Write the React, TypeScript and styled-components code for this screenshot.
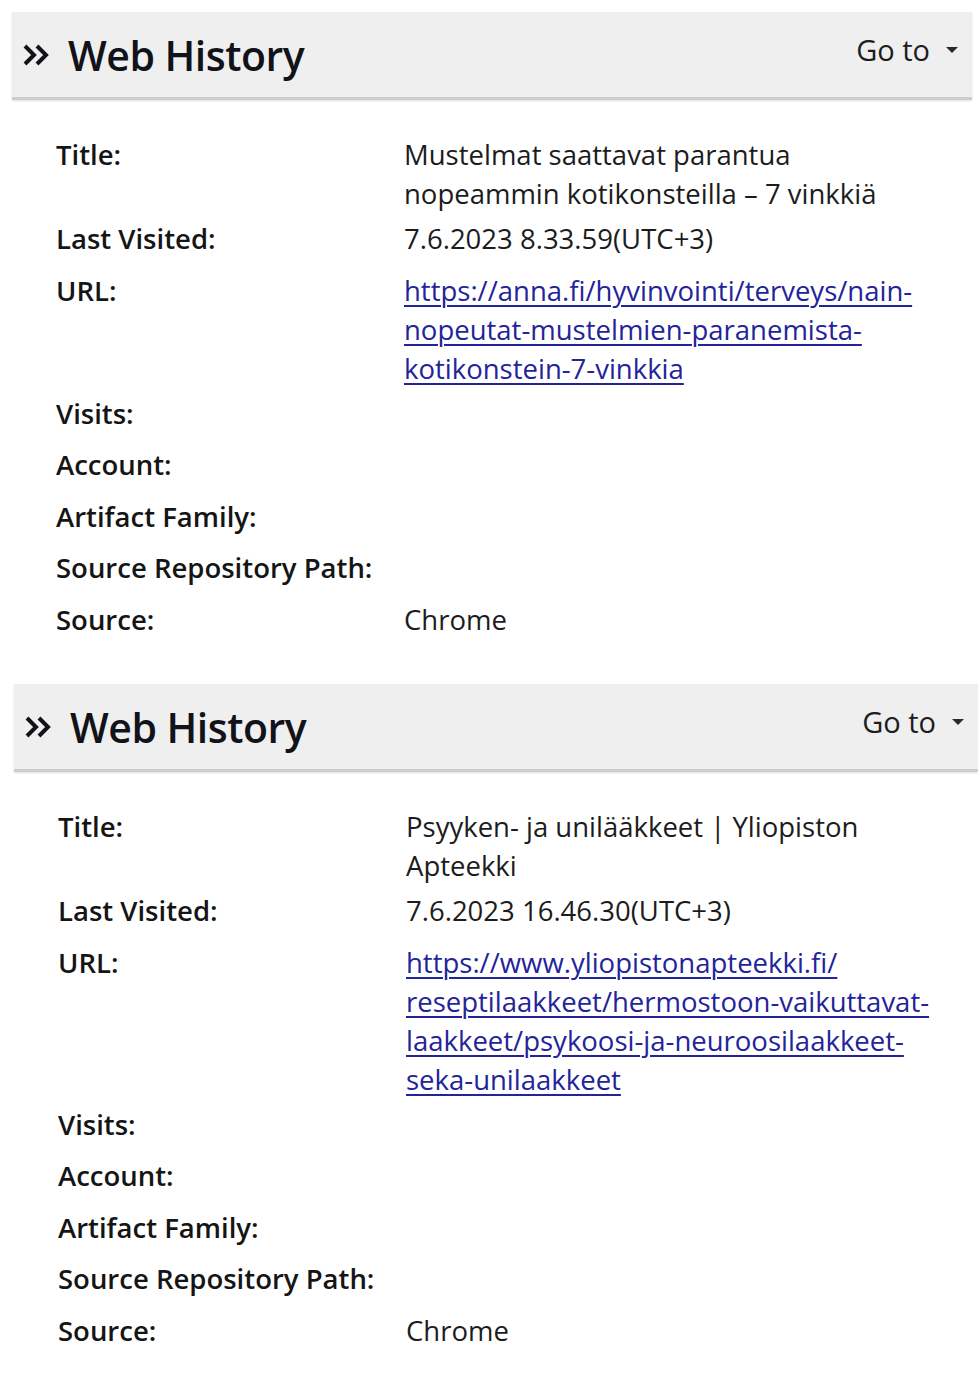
import styled, { createGlobalStyle } from "styled-components";
import { FC } from "react";

const GlobalStyle = createGlobalStyle`
  html, body {
    margin: 0;
    padding: 0;
    background: #ffffff;
  }
  body {
    font-family: "Open Sans", "Noto Sans", sans-serif;
    color: #161616;
  }
`;

interface Field {
  label: string;
  lines?: string[];
  link?: boolean;
}

interface RecordData {
  fields: Field[];
}

const records: RecordData[] = [
  {
    fields: [
      {
        label: "Title:",
        lines: ["Mustelmat saattavat parantua", "nopeammin kotikonsteilla – 7 vinkkiä"],
      },
      { label: "Last Visited:", lines: ["7.6.2023 8.33.59(UTC+3)"] },
      {
        label: "URL:",
        link: true,
        lines: [
          "https://anna.fi/hyvinvointi/terveys/nain-",
          "nopeutat-mustelmien-paranemista-",
          "kotikonstein-7-vinkkia",
        ],
      },
      { label: "Visits:" },
      { label: "Account:" },
      { label: "Artifact Family:" },
      { label: "Source Repository Path:" },
      { label: "Source:", lines: ["Chrome"] },
    ],
  },
  {
    fields: [
      {
        label: "Title:",
        lines: ["Psyyken- ja unilääkkeet | Yliopiston", "Apteekki"],
      },
      { label: "Last Visited:", lines: ["7.6.2023 16.46.30(UTC+3)"] },
      {
        label: "URL:",
        link: true,
        lines: [
          "https://www.yliopistonapteekki.fi/",
          "reseptilaakkeet/hermostoon-vaikuttavat-",
          "laakkeet/psykoosi-ja-neuroosilaakkeet-",
          "seka-unilaakkeet",
        ],
      },
      { label: "Visits:" },
      { label: "Account:" },
      { label: "Artifact Family:" },
      { label: "Source Repository Path:" },
      { label: "Source:", lines: ["Chrome"] },
    ],
  },
];

const Page = styled.div`
  display: flex;
  flex-direction: column;
  gap: 36px;
  padding: 12px 6px 40px 12px;
`;

const Section = styled.section<{ $shift?: number }>`
  display: flex;
  flex-direction: column;
  margin-left: ${(p) => p.$shift ?? 0}px;
  margin-right: ${(p) => -(p.$shift ?? 0) * 3}px;
`;

const Header = styled.header`
  display: flex;
  align-items: center;
  justify-content: space-between;
  height: 85px;
  padding: 0 14px 0 10px;
  background: #efefef;
  border-bottom: 3px solid #cdcdcd;
  box-shadow: 0 1px 2px rgba(0, 0, 0, 0.12);
`;

const HeaderTitle = styled.h2`
  display: flex;
  align-items: center;
  gap: 18px;
  margin: 0;
  font-size: 41px;
  font-weight: 600;
  letter-spacing: -0.5px;
  color: #111319;
`;

const GoTo = styled.button`
  display: flex;
  align-items: center;
  gap: 16px;
  margin-top: -10px;
  padding: 0;
  border: none;
  background: transparent;
  font-family: "Open Sans", "Noto Sans", sans-serif;
  font-size: 29px;
  color: #1d1d1d;
`;

const Caret = styled.span`
  width: 0;
  height: 0;
  border-left: 6px solid transparent;
  border-right: 6px solid transparent;
  border-top: 6px solid #2a2a2a;
`;

const Fields = styled.div`
  display: flex;
  flex-direction: column;
  padding: 32px 0 0 44px;
`;

const Row = styled.div`
  display: grid;
  grid-template-columns: 348px 1fr;
  align-items: start;
  min-height: 51.5px;
  padding: 3px 0;
  box-sizing: border-box;
  font-size: 27.5px;
  line-height: 39px;
`;

const Label = styled.div`
  font-weight: 600;
  color: #151515;
`;

const Value = styled.div<{ $link?: boolean }>`
  color: ${(p) => (p.$link ? "#23239a" : "#1c1c1c")};
  text-decoration: ${(p) => (p.$link ? "underline" : "none")};
  text-underline-offset: 4px;
  text-decoration-thickness: 2px;
  white-space: nowrap;
`;

const Chevrons: FC = () => (
  <svg width="28" height="22" viewBox="0 0 28 22" aria-hidden>
    <path
      d="M3 2 L12 11 L3 20 M15 2 L24 11 L15 20"
      fill="none"
      stroke="#111319"
      strokeWidth="4"
      strokeLinejoin="miter"
    />
  </svg>
);

const Record: FC<{ data: RecordData; shift?: number }> = ({ data, shift }) => (
  <Section $shift={shift}>
    <Header>
      <HeaderTitle>
        <Chevrons />
        Web History
      </HeaderTitle>
      <GoTo>
        Go to
        <Caret />
      </GoTo>
    </Header>
    <Fields>
      {data.fields.map((f) => (
        <Row key={f.label}>
          <Label>{f.label}</Label>
          <Value $link={f.link}>
            {(f.lines ?? []).map((line, i) => (
              <div key={i}>{line}</div>
            ))}
          </Value>
        </Row>
      ))}
    </Fields>
  </Section>
);

export default function App() {
  return (
    <>
      <GlobalStyle />
      <Page>
        {records.map((r, i) => (
          <Record key={i} data={r} shift={i === 1 ? 2 : 0} />
        ))}
      </Page>
    </>
  );
}
